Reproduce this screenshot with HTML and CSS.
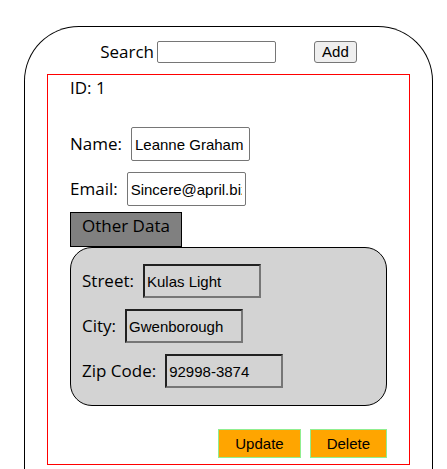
FILE: index.html
```html
<!DOCTYPE html>
<html lang="en">
<head>
<meta charset="utf-8">
<meta name="viewport" content="width=device-width, initial-scale=1">
<title>Users</title>
<link rel="stylesheet" href="styles.css">
</head>
<body>
<main class="panel">
  <div class="toolbar">
    <label for="search">Search</label>
    <input class="search" id="search" type="text">
    <button class="add" type="button">Add</button>
  </div>
  <form class="user">
    <div class="user-id">ID: 1</div>
    <div class="fields">
      <div class="field">
        <label for="name">Name:</label>
        <input id="name" type="text" value="Leanne Graham">
      </div>
      <div class="field">
        <label for="email">Email:</label>
        <input id="email" type="text" value="Sincere@april.biz">
      </div>
    </div>
    <button class="other" type="button">Other Data</button>
    <div class="address fields">
      <div class="field">
        <label for="street">Street:</label>
        <input id="street" type="text" value="Kulas Light">
      </div>
      <div class="field">
        <label for="city">City:</label>
        <input id="city" type="text" value="Gwenborough">
      </div>
      <div class="field">
        <label for="zip">Zip Code:</label>
        <input id="zip" type="text" value="92998-3874">
      </div>
    </div>
    <div class="actions">
      <button class="action" type="button">Update</button>
      <button class="action" type="button">Delete</button>
    </div>
  </form>
</main>
</body>
</html>
```
FILE: styles.css
```css
* {
  box-sizing: border-box;
}

body {
  display: flex;
  flex-direction: column;
  min-height: 100vh;
  margin: 0;
  padding: 26px 14px 0 24px;
  background: #fff;
  color: #000;
  font: 17px/22px "Segoe UI", "Open Sans", sans-serif;
}

input,
button {
  font: 15px/18px Arial, "Liberation Sans", sans-serif;
  color: #000;
}

.panel {
  flex: 1;
  padding: 14px 22px 4px;
  border: 1px solid #000;
  border-bottom: 0;
  border-radius: 55px 55px 0 0;
}

.toolbar {
  display: flex;
  justify-content: center;
  align-items: center;
  gap: 3px;
  height: 22px;
  margin-bottom: 11px;
}

.search {
  width: 119px;
  height: 22px;
  padding: 1px 2px;
  border: 1px solid #767676;
  border-radius: 2px;
  background: #fff;
}

.add {
  height: 22px;
  margin-left: 35px;
  padding: 0 7px;
  border: 1px solid #767676;
  border-radius: 3px;
  background: #efefef;
}

.user {
  padding: 0 22px 6px;
  border: 1px solid #f00;
}

.user-id {
  padding: 2px 0 28px;
}

.fields {
  display: flex;
  flex-direction: column;
  gap: 11px;
}

.field {
  display: flex;
  align-items: center;
  gap: 9px;
}

.field input {
  width: 119px;
  height: 34px;
  padding: 0 3px;
  border: 1px solid #767676;
  border-radius: 2px;
  background: #fff;
}

.other {
  display: block;
  height: 35px;
  margin-top: 6px;
  padding: 0 11px 7px;
  border: 1px solid #000;
  background: #808080;
  font: inherit;
}

.address {
  padding: 16px 11px 17px;
  border: 1px solid #000;
  border-radius: 22px;
  background: #d3d3d3;
}

.address .field input {
  width: 118px;
  padding: 0 2px;
  border: 2px inset #767676;
  border-radius: 0;
  background: transparent;
}

.actions {
  display: flex;
  justify-content: flex-end;
  gap: 9px;
  margin-top: 23px;
}

.action {
  height: 29px;
  padding: 0 16px;
  border: 1px solid #90ee90;
  background: #ffa500;
}
```
